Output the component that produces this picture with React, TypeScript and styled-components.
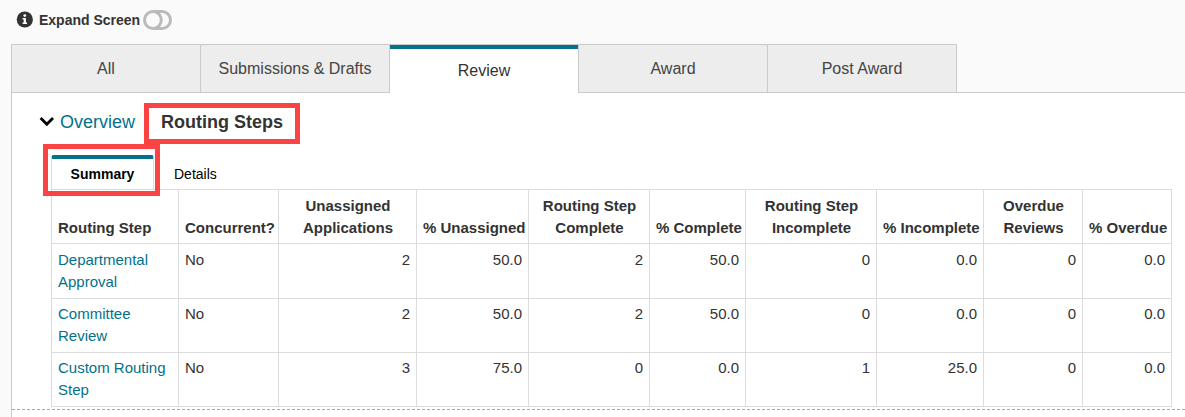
import React from "react";
import styled, { createGlobalStyle, css } from "styled-components";

const teal = "#04718b";
const line = "#dcdcdc";
const tabLine = "#cacaca";

const GlobalStyle = createGlobalStyle`
  * { box-sizing: border-box; }
  body {
    margin: 0;
    background: #fafafa;
    color: #333;
    font-family: Arial, "Liberation Sans", sans-serif;
  }
`;

const Page = styled.div`
  display: flex;
  flex-direction: column;
  min-height: 100vh;
`;

const TopBar = styled.header`
  display: flex;
  align-items: center;
  gap: 6px;
  height: 44px;
  padding: 0 16px 5px;
`;

const ToggleLabel = styled.label`
  display: flex;
  align-items: center;
  gap: 3px;
  font-size: 14px;
  line-height: 20px;
  font-weight: bold;
  cursor: pointer;
`;

const ToggleInput = styled.input`
  appearance: none;
  position: absolute;
  inset: 0;
  margin: 0;
  opacity: 0;
  cursor: pointer;
`;

const ToggleBox = styled.span`
  position: relative;
  display: flex;
`;

const MainTabs = styled.nav`
  display: flex;
  padding-left: 11px;
  height: 49px;
`;

const MainTab = styled.button<{ $active?: boolean }>`
  flex: 0 1 189px;
  min-width: 0;
  margin: 0;
  padding: 0;
  border: solid ${tabLine};
  border-width: 1px 0 1px 1px;
  background: #ededed;
  color: #444;
  font: 16px/20px Arial, "Liberation Sans", sans-serif;
  white-space: nowrap;
  cursor: pointer;
  ${(p) =>
    p.$active &&
    css`
      padding-top: 4px;
      border-bottom: 0;
      background: linear-gradient(${teal} 4px, #fff 4px);
      color: #333;
    `}
`;

const TabsRest = styled.div`
  flex: 1;
  border-left: 1px solid ${tabLine};
  border-bottom: 1px solid ${tabLine};
`;

const Panel = styled.main`
  flex: 1;
  margin-left: 11px;
  border-left: 1px solid ${tabLine};
  background: #fff;
`;

const Section = styled.section`
  padding: 11px 13px 2px 39px;
  border-bottom: 1px dashed #a6a6a6;
`;

const Views = styled.div`
  display: flex;
  align-items: center;
  height: 36px;
  margin-left: -12px;
  font-size: 18px;
  line-height: 24px;
`;

const ViewLink = styled.a`
  margin: 0 26px 0 6px;
  color: ${teal};
  text-decoration: none;
`;

const callout = css`
  position: relative;
  &::after {
    content: "";
    position: absolute;
    z-index: 1;
    border: 5px solid #fc4343;
    pointer-events: none;
  }
`;

const CurrentView = styled.h1`
  ${callout}
  margin: 0;
  font-size: 18px;
  line-height: 24px;
  &::after {
    inset: -7px -17px -10px -17px;
  }
`;

const SubTabs = styled.div`
  display: flex;
  height: 34px;
  margin-top: 15px;
`;

const SubTab = styled.button<{ $active?: boolean }>`
  margin: 0;
  padding: 4px 20px 0;
  border: 0;
  background: none;
  color: #000;
  font: 14px/20px Arial, "Liberation Sans", sans-serif;
  cursor: pointer;
  ${(p) =>
    p.$active &&
    css`
      ${callout}
      width: 103px;
      padding: 0;
      border: solid ${line};
      border-width: 4px 1px 0;
      border-top-color: ${teal};
      border-radius: 3px 3px 0 0;
      background: #fff;
      font-weight: bold;
      &::after {
        inset: -15px -7px -7px -9px;
      }
    `}
`;

const TableScroll = styled.div`
  overflow-x: auto;
`;

const Table = styled.table`
  width: 100%;
  min-width: 1120px;
  table-layout: fixed;
  border-collapse: separate;
  border-spacing: 0;
  border-top: 1px solid ${line};
  border-left: 1px solid ${line};
  font-size: 15px;
  line-height: 22px;
`;

const Col = styled.col<{ $w: number }>`
  width: ${(p) => p.$w}px;
`;

const HeadCell = styled.th<{ $align?: string }>`
  padding: 5px 5px 4px 6px;
  border: solid ${line};
  border-width: 0 1px 1px 0;
  text-align: ${(p) => p.$align || "center"};
  vertical-align: bottom;
  white-space: nowrap;
`;

const Cell = styled.td<{ $num?: boolean }>`
  padding: 4px 6px 5px;
  border: solid ${line};
  border-width: 0 1px 1px 0;
  text-align: ${(p) => (p.$num ? "right" : "left")};
  vertical-align: top;
  tr:first-child > & {
    padding-top: 5px;
  }
`;

const StepLink = styled.a`
  color: ${teal};
  text-decoration: none;
`;

const columns: { lines: string[]; width: number; align?: string }[] = [
  { lines: ["Routing Step"], width: 127, align: "left" },
  { lines: ["Concurrent?"], width: 100, align: "left" },
  { lines: ["Unassigned", "Applications"], width: 138 },
  { lines: ["% Unassigned"], width: 112 },
  { lines: ["Routing Step", "Complete"], width: 121 },
  { lines: ["% Complete"], width: 96 },
  { lines: ["Routing Step", "Incomplete"], width: 131 },
  { lines: ["% Incomplete"], width: 107 },
  { lines: ["Overdue", "Reviews"], width: 99 },
  { lines: ["% Overdue"], width: 89 },
];

const rows = [
  { step: ["Departmental", "Approval"], values: ["2", "50.0", "2", "50.0", "0", "0.0", "0", "0.0"] },
  { step: ["Committee", "Review"], values: ["2", "50.0", "2", "50.0", "0", "0.0", "0", "0.0"] },
  { step: ["Custom Routing", "Step"], values: ["3", "75.0", "0", "0.0", "1", "25.0", "0", "0.0"] },
];

const Lines = ({ text }: { text: string[] }) => (
  <>
    {text.map((t, i) => (
      <React.Fragment key={t}>
        {i > 0 && <br />}
        {t}
      </React.Fragment>
    ))}
  </>
);

const InfoIcon = () => (
  <svg width="17" height="17" viewBox="0 0 17 17" aria-hidden="true">
    <circle cx="8.8" cy="8.5" r="8.1" fill="#333" />
    <circle cx="8.8" cy="4.6" r="1.4" fill="#fff" />
    <path d="M6.6 7h3.3v4.4h1.1V13H6.6v-1.6h1.1V8.6H6.6z" fill="#fff" />
  </svg>
);

const ToggleIcon = () => (
  <svg width="29" height="20" viewBox="0 0 29 20" fill="none" stroke="#bababa" strokeWidth="3" aria-hidden="true">
    <rect x="1.5" y="1.5" width="26" height="17" rx="8.5" />
    <path d="M12 1.8A8.5 8.5 0 0 1 12 18.2" />
  </svg>
);

const Chevron = () => (
  <svg width="15" height="10" viewBox="0 0 15 10" fill="none" stroke="#000" strokeWidth="2.8" aria-hidden="true">
    <path d="M1.6 1L7.8 7.2L14 1" />
  </svg>
);

export default function App() {
  return (
    <Page>
      <GlobalStyle />
      <TopBar>
        <InfoIcon />
        <ToggleLabel>
          Expand Screen
          <ToggleBox>
            <ToggleInput type="checkbox" />
            <ToggleIcon />
          </ToggleBox>
        </ToggleLabel>
      </TopBar>
      <MainTabs>
        {["All", "Submissions & Drafts", "Review", "Award", "Post Award"].map((name) => (
          <MainTab key={name} type="button" $active={name === "Review"}>
            {name}
          </MainTab>
        ))}
        <TabsRest />
      </MainTabs>
      <Panel>
        <Section>
          <Views>
            <Chevron />
            <ViewLink href="#overview">Overview</ViewLink>
            <CurrentView>Routing Steps</CurrentView>
          </Views>
          <SubTabs>
            <SubTab type="button" $active>
              Summary
            </SubTab>
            <SubTab type="button">Details</SubTab>
          </SubTabs>
          <TableScroll>
            <Table>
              <colgroup>
                {columns.map((c) => (
                  <Col key={c.lines.join(" ")} $w={c.width} />
                ))}
              </colgroup>
              <thead>
                <tr>
                  {columns.map((c) => (
                    <HeadCell key={c.lines.join(" ")} scope="col" $align={c.align}>
                      <Lines text={c.lines} />
                    </HeadCell>
                  ))}
                </tr>
              </thead>
              <tbody>
                {rows.map((r) => (
                  <tr key={r.step[0]}>
                    <Cell>
                      <StepLink href="#step">
                        <Lines text={r.step} />
                      </StepLink>
                    </Cell>
                    <Cell>No</Cell>
                    {r.values.map((v, i) => (
                      <Cell key={i} $num>
                        {v}
                      </Cell>
                    ))}
                  </tr>
                ))}
              </tbody>
            </Table>
          </TableScroll>
        </Section>
      </Panel>
    </Page>
  );
}
